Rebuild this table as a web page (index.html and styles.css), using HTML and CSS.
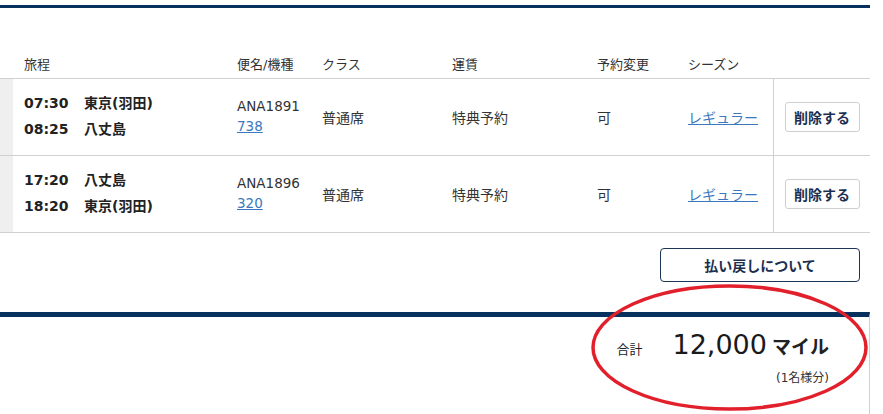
FILE: index.html
```html
<!DOCTYPE html>
<html lang="ja">
<head>
<meta charset="utf-8">
<title>旅程</title>
<link rel="stylesheet" href="styles.css">
</head>
<body>
<div class="page">
  <div class="topbar"></div>
  <div class="table">
    <div class="row head">
      <div class="strip"></div>
      <div class="cell itin">旅程</div>
      <div class="cell">便名/機種</div>
      <div class="cell">クラス</div>
      <div class="cell">運賃</div>
      <div class="cell">予約変更</div>
      <div class="cell">シーズン</div>
      <div class="cell"></div>
    </div>
    <div class="row body">
      <div class="strip"></div>
      <div class="cell itin">
        <div class="leg"><span class="time">07:30</span><span class="city">東京(羽田)</span></div>
        <div class="leg"><span class="time">08:25</span><span class="city">八丈島</span></div>
      </div>
      <div class="cell flight">
        <span>ANA1891</span>
        <a class="link" href="#">738</a>
      </div>
      <div class="cell">普通席</div>
      <div class="cell">特典予約</div>
      <div class="cell">可</div>
      <div class="cell"><a class="link" href="#">レギュラー</a></div>
      <div class="cell action"><button class="del">削除する</button></div>
    </div>
    <div class="row body">
      <div class="strip"></div>
      <div class="cell itin">
        <div class="leg"><span class="time">17:20</span><span class="city">八丈島</span></div>
        <div class="leg"><span class="time">18:20</span><span class="city">東京(羽田)</span></div>
      </div>
      <div class="cell flight">
        <span>ANA1896</span>
        <a class="link" href="#">320</a>
      </div>
      <div class="cell">普通席</div>
      <div class="cell">特典予約</div>
      <div class="cell">可</div>
      <div class="cell"><a class="link" href="#">レギュラー</a></div>
      <div class="cell action"><button class="del">削除する</button></div>
    </div>
  </div>
  <div class="refund-wrap"><button class="refund">払い戻しについて</button></div>
  <div class="total">
    <div class="total-line">
      <span class="total-label">合計</span>
      <span class="total-num">12,000</span>
      <span class="total-unit">マイル</span>
    </div>
    <div class="total-note">(1名様分)</div>
  </div>
  <svg class="mark" width="883" height="414" viewBox="0 0 883 414">
    <ellipse cx="729.5" cy="347.5" rx="136.5" ry="61.5" fill="none" stroke="#e2202c" stroke-width="3.5"/>
  </svg>
</div>
</body>
</html>
```
FILE: styles.css
```css
html, body {
  margin: 0;
  padding: 0;
  background: #ffffff;
}
body {
  font-family: "DejaVu Sans", "Noto Sans CJK JP", sans-serif;
  color: #333333;
  font-size: 14px;
}
.page {
  position: relative;
  width: 883px;
  height: 414px;
  overflow: hidden;
}
.topbar {
  margin-top: 5px;
  width: 870px;
  height: 3px;
  background: #06305d;
}
.table {
  width: 870px;
  margin-top: 40px;
}
.row {
  display: grid;
  grid-template-columns: 13px 224px 85px 130px 145px 91px 85px 97px;
  border-bottom: 1px solid #d0d0d0;
}
.row.head {
  height: 30px;
  font-size: 13px;
  color: #333333;
}
.row.body {
  height: 76px;
}
.row.body .strip {
  background: #efefef;
}
.cell {
  display: flex;
  flex-direction: column;
  justify-content: center;
  align-items: flex-start;
}
.cell.itin {
  padding-left: 11px;
}
.row.body .cell.itin {
  padding-bottom: 3px;
}
.leg {
  display: flex;
  line-height: 26px;
  font-weight: bold;
  color: #222222;
}
.time {
  width: 60px;
}
.flight {
  font-size: 13.5px;
  line-height: 20px;
  padding-bottom: 3px;
}
.link {
  color: #3a78bd;
  text-decoration: underline;
}
.cell.action {
  border-left: 1px solid #d0d0d0;
  align-items: center;
}
.del {
  width: 75px;
  height: 30px;
  border: 1px solid #cfcfcf;
  border-radius: 3px;
  background: #ffffff;
  font-family: inherit;
  font-size: 14px;
  font-weight: bold;
  color: #1c2f4f;
  padding: 0;
}
.refund-wrap {
  width: 870px;
  display: flex;
  justify-content: flex-end;
  padding-top: 15px;
}
.refund {
  width: 200px;
  height: 34px;
  margin-right: 10px;
  border: 1px solid #1b3556;
  border-radius: 4px;
  background: #ffffff;
  font-family: inherit;
  font-size: 14px;
  font-weight: bold;
  color: #1c2f4f;
  padding: 0;
}
.total {
  margin-top: 30px;
  width: 869px;
  height: 84px;
  border-top: 5px solid #06305d;
  border-right: 1px solid #d0d0d0;
  border-bottom: 1px solid #d0d0d0;
  display: flex;
  flex-direction: column;
  align-items: flex-end;
  padding-top: 13px;
  box-sizing: content-box;
}
.total-line {
  display: flex;
  align-items: baseline;
  height: 30px;
  line-height: 30px;
  margin-right: 40px;
}
.total-label {
  font-size: 13px;
  color: #222222;
  margin-right: 30px;
}
.total-num {
  font-size: 27px;
  color: #1a1a1a;
  margin-right: 5px;
}
.total-unit {
  font-size: 19px;
  font-weight: bold;
  color: #222222;
}
.total-note {
  margin-top: 10px;
  margin-right: 40px;
  font-size: 12px;
  line-height: 16px;
  color: #333333;
}
.mark {
  position: absolute;
  top: 0;
  left: 0;
  pointer-events: none;
}
```
